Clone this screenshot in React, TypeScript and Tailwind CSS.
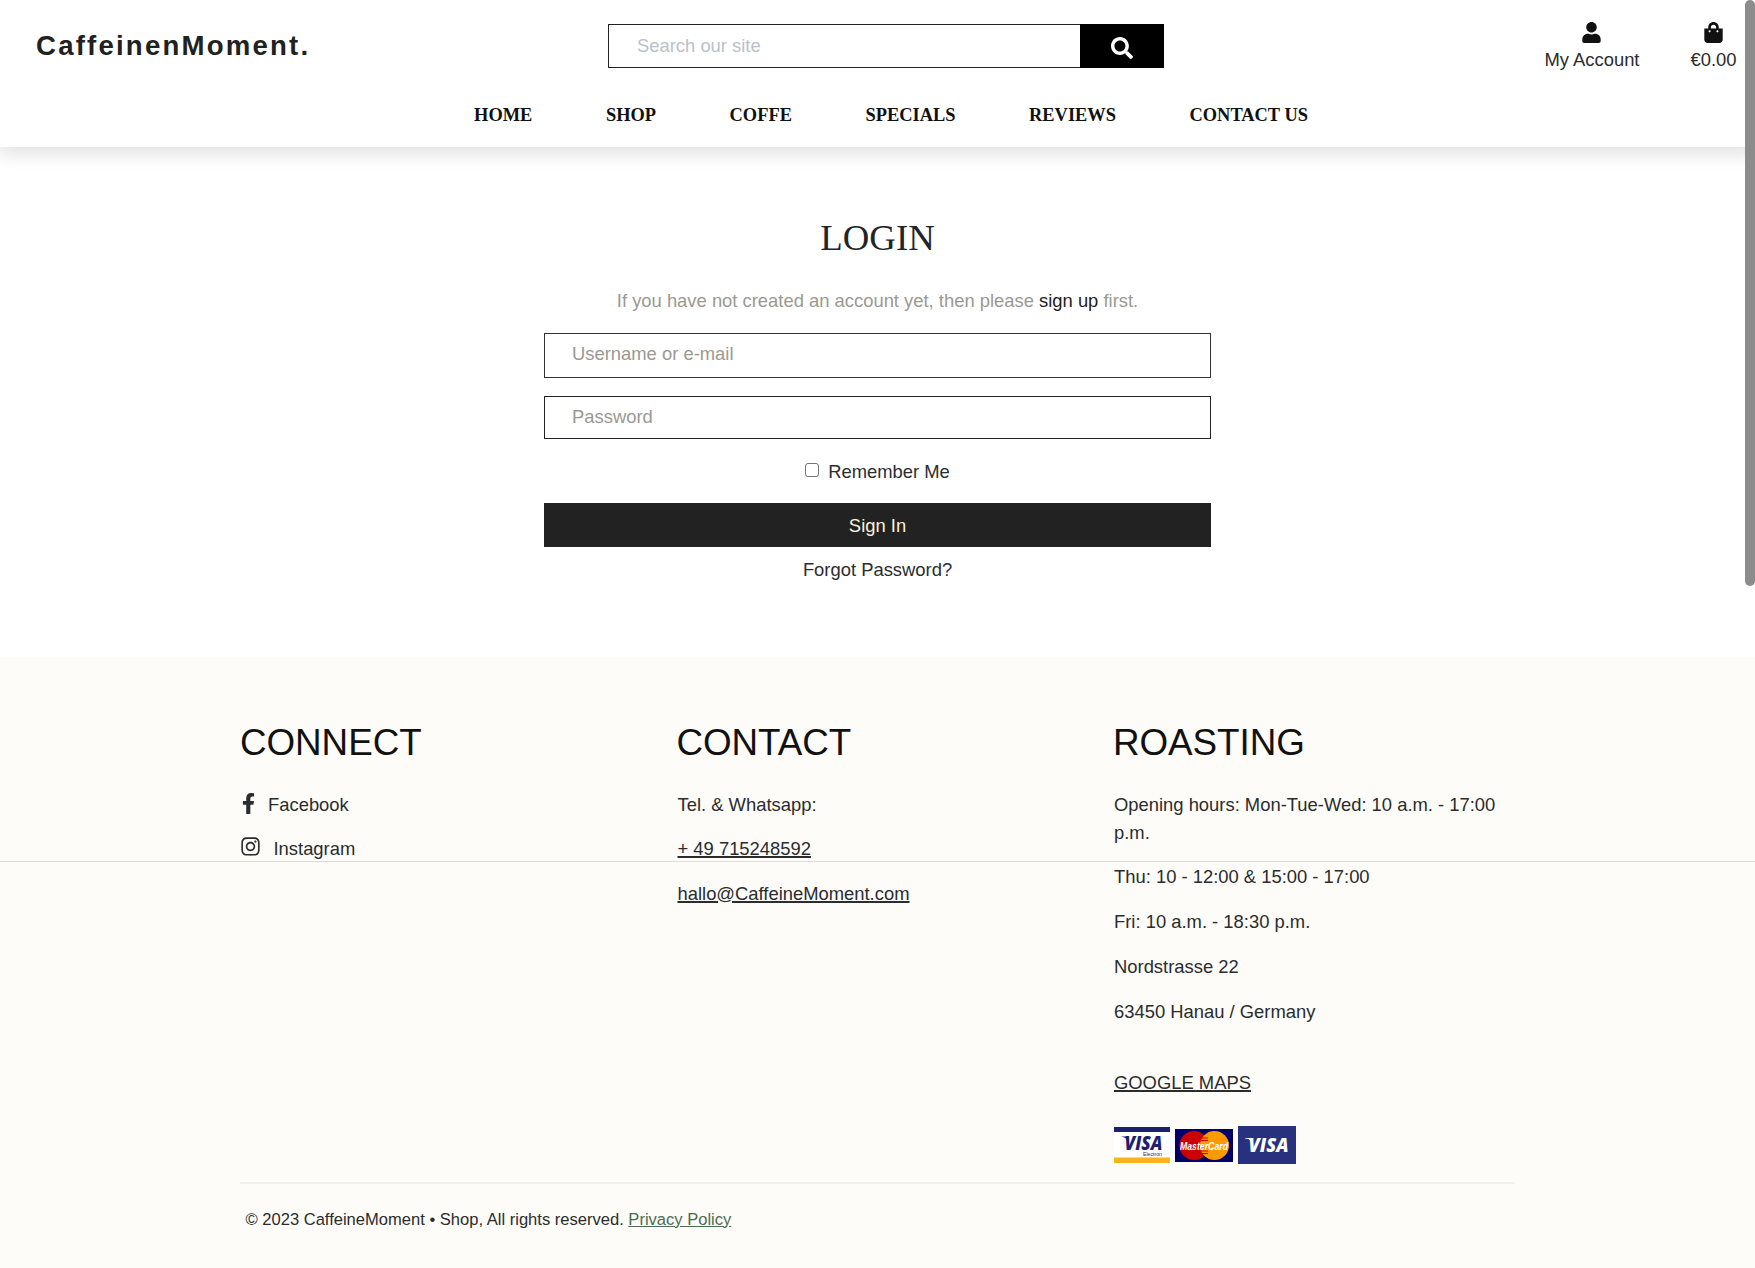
import React from "react";
import { FaFacebookF, FaInstagram, FaSearch, FaShoppingBag, FaUser } from "react-icons/fa";

const navItems = ["HOME", "SHOP", "COFFE", "SPECIALS", "REVIEWS", "CONTACT US"];

function Header() {
  return (
    <header className="relative h-[147px] bg-white shadow-[0_8px_16px_rgba(0,0,0,0.11)]">
      <div className="flex h-[102px] items-start pl-9">
        <a className="mt-[25px] w-[572px] text-[27.6px] leading-[42px] font-bold tracking-[2.2px] text-[#212121]">
          CaffeinenMoment.
        </a>
        <form className="mt-6 flex h-11 w-[556px]">
          <input
            className="h-11 w-[472px] border border-r-0 border-[#222] bg-white px-7 placeholder:text-[#b9c1cc] outline-none"
            placeholder="Search our site"
          />
          <button type="button" className="flex h-11 w-[84px] items-center justify-center bg-black pt-1 text-white">
            <FaSearch size={22} />
          </button>
        </form>
        <div className="mt-[22px] ml-auto flex gap-[51px] pr-[18.5px] text-[#2a2c2e]">
          <a className="flex flex-col items-center">
            <FaUser size={21} className="text-[#111]" />
            <span className="mt-[3px]">My Account</span>
          </a>
          <a className="flex flex-col items-center">
            <FaShoppingBag size={21} className="text-[#111]" />
            <span className="mt-[3px]">€0.00</span>
          </a>
        </div>
      </div>
      <nav className="flex justify-center gap-[73.6px] pl-[27px] font-['Liberation_Serif',serif] font-bold text-[#111]">
        {navItems.map((item) => (
          <a key={item}>{item}</a>
        ))}
      </nav>
    </header>
  );
}

function Login() {
  return (
    <main className="flex h-[510px] flex-col items-center bg-white pt-[69px]">
      <h1 className="font-['Liberation_Serif',serif] text-[36.8px] leading-[43px] text-[#212529]">LOGIN</h1>
      <p className="mt-[28.4px] text-[#9b9990]">
        If you have not created an account yet, then please <a className="text-[#212121]">sign up</a> first.
      </p>
      <form className="mt-[18px] flex w-[667px] flex-col items-center">
        <input
          className="h-[45px] w-full border border-[#333] bg-white px-[27px] pb-0.5 placeholder:text-[#9b9990] outline-none"
          placeholder="Username or e-mail"
        />
        <input
          className="mt-[18px] h-[43px] w-full border border-[#222] bg-white px-[27px] placeholder:text-[#9b9990] outline-none"
          placeholder="Password"
        />
        <label className="mt-[19px] flex text-[#2a2d30]">
          <span className="mt-[5px] mr-[9px] size-[14px] rounded-[3px] border border-[#767676] bg-white" />
          Remember Me
        </label>
        <button type="button" className="mt-[17.4px] h-11 w-full bg-[#222] pt-px text-[#fbf1dc]">
          Sign In
        </button>
        <a className="mt-[9.4px] text-[#2a2d30]">Forgot Password?</a>
      </form>
    </main>
  );
}

function VisaElectron() {
  return (
    <svg width="56" height="36" viewBox="0 0 56 36" className="overflow-visible">
      <rect width="56" height="36" fill="#fff" />
      <rect width="56" height="5" fill="#1f1f6e" />
      <rect y="30.5" width="56" height="5.5" fill="#f5b51b" />
      <path d="M7 9.5h6l2 8-2.500-5.500q-1.500-2-5.500-2.500z" fill="#1f1f6e" />
      <text x="10.500" y="23" textLength="38" lengthAdjust="spacingAndGlyphs" fontFamily="Open Sans, sans-serif" fontSize="18.500" fontWeight="800" fontStyle="italic" fill="#1f1f6e">VISA</text>
      <text x="29" y="28.500" textLength="19" lengthAdjust="spacingAndGlyphs" fontFamily="Liberation Sans, sans-serif" fontSize="5" fill="#1f1f6e">Electron</text>
    </svg>
  );
}

function MasterCard() {
  return (
    <svg width="58" height="33" viewBox="0 0 58 33" className="mt-px overflow-visible">
      <rect width="58" height="33" fill="#000066" />
      <circle cx="19" cy="16.500" r="14.500" fill="#cc0000" />
      <circle cx="39.500" cy="16.500" r="14.500" fill="#ff9900" />
      <path d="M27 9h6M26 11.500h7M26 22h7M27 24.500h6" stroke="#cc0000" strokeWidth="1" />
      <text x="5" y="20.500" textLength="48" lengthAdjust="spacingAndGlyphs" fontFamily="Liberation Sans, sans-serif" fontSize="10.500" fontWeight="700" fontStyle="italic" fill="#fff">MasterCard</text>
    </svg>
  );
}

function Visa() {
  return (
    <svg width="58" height="38" viewBox="0 0 58 38" className="overflow-visible">
      <rect width="58" height="38" fill="#28317d" />
      <path d="M7 12h6l2 8-2.500-5.500q-1.500-2-5.500-2z" fill="#fff" />
      <text x="10.500" y="26" textLength="40" lengthAdjust="spacingAndGlyphs" fontFamily="Open Sans, sans-serif" fontSize="18.500" fontWeight="800" fontStyle="italic" fill="#fff">VISA</text>
    </svg>
  );
}

function FooterColumn({ title, children }: { title: string; children: React.ReactNode }) {
  return (
    <section className="w-[436.5px] pr-9">
      <h2 className="mb-[27px] -ml-px text-[36.8px] leading-[43px] tracking-[-0.05px] text-[#111]">{title}</h2>
      <div className="flex flex-col items-start gap-[17.2px]">{children}</div>
    </section>
  );
}

function Footer() {
  return (
    <footer className="relative h-[611px] bg-[#fdfcf8] text-[#2a2c2e]">
      <div className="absolute top-[204px] left-0 h-px w-full bg-[#dcdcda]" />
      <div className="ml-60 w-[1275px] pt-[64px]">
        <div className="flex h-[461px] w-[1311px] pl-px">
          <FooterColumn title="CONNECT">
            <a className="flex">
              <FaFacebookF size={21} className="-ml-[3px] mt-0.5 mr-[9px]" />
              Facebook
            </a>
            <a className="-mt-[0.8px] flex">
              <FaInstagram size={21} className="-ml-px mt-[1.5px] mr-[12.5px]" />
              Instagram
            </a>
          </FooterColumn>
          <FooterColumn title="CONTACT">
            <p>Tel. &amp; Whatsapp:</p>
            <a className="-mt-[0.8px] underline decoration-2">+ 49 715248592</a>
            <a className="underline decoration-2">hallo@CaffeineMoment.com</a>
          </FooterColumn>
          <FooterColumn title="ROASTING">
            <p>Opening hours: Mon-Tue-Wed: 10 a.m. - 17:00 p.m.</p>
            <p>Thu: 10 - 12:00 &amp; 15:00 - 17:00</p>
            <p>Fri: 10 a.m. - 18:30 p.m.</p>
            <p>Nordstrasse 22</p>
            <p>63450 Hanau / Germany</p>
            <a className="mt-[26.8px] underline decoration-2">GOOGLE MAPS</a>
            <div className="mt-[12px] flex items-center gap-[5px]">
              <VisaElectron />
              <MasterCard />
              <Visa />
            </div>
          </FooterColumn>
        </div>
        <div className="border-t-2 border-[#f0f0ec] pt-[21.500px] pl-[5.500px] text-[16.56px]">
          © 2023 CaffeineMoment • Shop, All rights reserved. <a className="text-[#4c6b50] underline">Privacy Policy</a>
        </div>
      </div>
    </footer>
  );
}

export default function App() {
  return (
    <div className="relative h-[1268px] w-[1755px] overflow-hidden bg-white font-['Liberation_Sans',Arial,sans-serif] text-[18.4px] leading-[27.6px]">
      <Header />
      <Login />
      <Footer />
      <div className="absolute top-0 right-0 h-[586px] w-[10px] rounded-full bg-[#8c8c8c]" />
    </div>
  );
}
